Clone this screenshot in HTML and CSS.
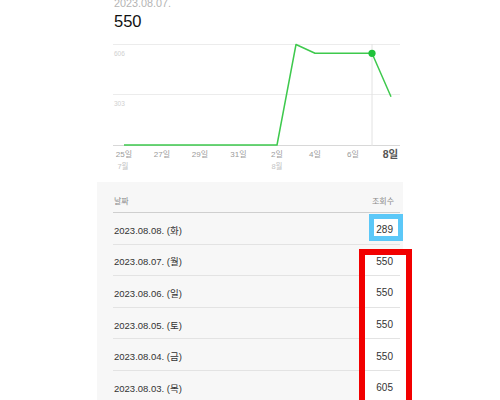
FILE: index.html
```html
<!DOCTYPE html>
<html lang="ko">
<head>
<meta charset="utf-8">
<link rel="stylesheet" href="styles.css">
</head>
<body>
<div class="page">
  <div class="summary">
    <div class="date">2023.08.07.</div>
    <div class="value">550</div>
  </div>
  <svg class="chart" width="306" height="135" viewBox="0 0 306 135">
    <line class="grid" x1="16" y1="4.5" x2="303" y2="4.5"/>
    <line class="grid" x1="16" y1="54.5" x2="303" y2="54.5"/>
    <line class="grid base" x1="16" y1="105.5" x2="303" y2="105.5"/>
    <line class="cursor" x1="275" y1="4" x2="275" y2="106"/>
    <text class="ylab" x="17" y="15.5">606</text>
    <text class="ylab" x="17" y="65.5">303</text>
    <polyline class="series" points="27,105 180,105 199,4.5 218,13.3 275,13.3 294,56.8"/>
    <circle class="dot" cx="275" cy="13.3" r="3.6"/>
    <text class="xlab" x="27" y="117">25일</text>
    <text class="xlab" x="65" y="117">27일</text>
    <text class="xlab" x="103" y="117">29일</text>
    <text class="xlab" x="141.5" y="117">31일</text>
    <text class="xlab" x="180" y="117">2일</text>
    <text class="xlab" x="218" y="117">4일</text>
    <text class="xlab" x="256" y="117">6일</text>
    <text class="xlab sel" x="293.5" y="118">8일</text>
    <text class="mlab" x="26" y="129">7월</text>
    <text class="mlab" x="180" y="129">8월</text>
  </svg>
  <div class="panel">
    <div class="thead">
      <span>날짜</span>
      <span>조회수</span>
    </div>
    <div class="row"><span class="d">2023.08.08. (화)</span><span class="n">289</span></div>
    <div class="row"><span class="d">2023.08.07. (월)</span><span class="n">550</span></div>
    <div class="row"><span class="d">2023.08.06. (일)</span><span class="n">550</span></div>
    <div class="row"><span class="d">2023.08.05. (토)</span><span class="n">550</span></div>
    <div class="row"><span class="d">2023.08.04. (금)</span><span class="n">550</span></div>
    <div class="row"><span class="d">2023.08.03. (목)</span><span class="n">605</span></div>
  </div>
  <div class="fill fill-blue"></div>
  <div class="fill fill-red"></div>
  <div class="mark mark-blue"></div>
  <div class="mark mark-red"></div>
</div>
</body>
</html>
```
FILE: styles.css
```css
html, body {
  margin: 0;
  padding: 0;
  background: #ffffff;
  overflow: hidden;
}
body {
  width: 500px;
  height: 400px;
  font-family: "Liberation Sans", "Noto Sans CJK KR", sans-serif;
}
.page {
  position: relative;
  width: 500px;
  height: 400px;
  overflow: hidden;
}
.summary {
  margin-left: 114px;
  margin-top: -3px;
  height: 43px;
}
.date {
  font-size: 10.8px;
  line-height: 12px;
  color: #b4b4b4;
}
.value {
  font-size: 16.5px;
  line-height: 18px;
  color: #111;
  margin-top: 3px;
}
.chart {
  display: block;
  margin-left: 97px;
  font-family: "Liberation Sans", "Noto Sans CJK KR", sans-serif;
}
.grid {
  stroke: #ececec;
  stroke-width: 1;
}
.grid.base {
  stroke: #d8d8d8;
}
.cursor {
  stroke: #e2e2e2;
  stroke-width: 1;
}
.ylab {
  font-size: 6.5px;
  fill: #d0d0d0;
}
.series {
  fill: none;
  stroke: #3ec94d;
  stroke-width: 1.5;
  stroke-linejoin: round;
}
.dot {
  fill: #1fc23a;
}
.xlab {
  font-size: 8px;
  fill: #9a9a9a;
  text-anchor: middle;
}
.xlab.sel {
  font-size: 10.5px;
  font-weight: bold;
  fill: #555;
}
.mlab {
  font-size: 7.5px;
  fill: #c4c4c4;
  text-anchor: middle;
}
.panel {
  position: relative;
  margin-left: 97px;
  margin-top: 7px;
  width: 306px;
  height: 260px;
  background: #f7f7f7;
  padding: 0 3px 0 16px;
  box-sizing: border-box;
}
.thead {
  position: relative;
  z-index: 1;
  height: 31px;
  box-sizing: border-box;
  padding: 10px 6px 0 1px;
  border-bottom: 1px solid #cfcfcf;
  display: flex;
  justify-content: space-between;
  align-items: center;
  font-size: 8px;
  color: #8a8a8a;
}
.thead span {
  line-height: 20px;
}
.row {
  position: relative;
  z-index: 1;
  height: 31.6px;
  box-sizing: border-box;
  padding: 3px 7px 0 1px;
  border-bottom: 1px solid #e3e3e3;
  display: flex;
  justify-content: space-between;
  align-items: center;
  color: #333;
}
.row .d {
  font-size: 9.5px;
}
.row .n {
  font-size: 10px;
}
.fill {
  position: absolute;
  background: #ffffff;
  z-index: 0;
}
.fill-blue {
  left: 374px;
  top: 219px;
  width: 24px;
  height: 17px;
}
.fill-red {
  left: 365px;
  top: 255px;
  width: 41px;
  height: 160px;
}
.page .panel {
  z-index: auto;
}
.mark {
  position: absolute;
  z-index: 3;
  box-sizing: border-box;
}
.mark-blue {
  left: 369px;
  top: 214px;
  width: 34px;
  height: 27px;
  border: 5px solid #5cc8f8;
}
.mark-red {
  left: 359px;
  top: 249px;
  width: 53px;
  height: 170px;
  border: 6px solid #f20000;
}
```
